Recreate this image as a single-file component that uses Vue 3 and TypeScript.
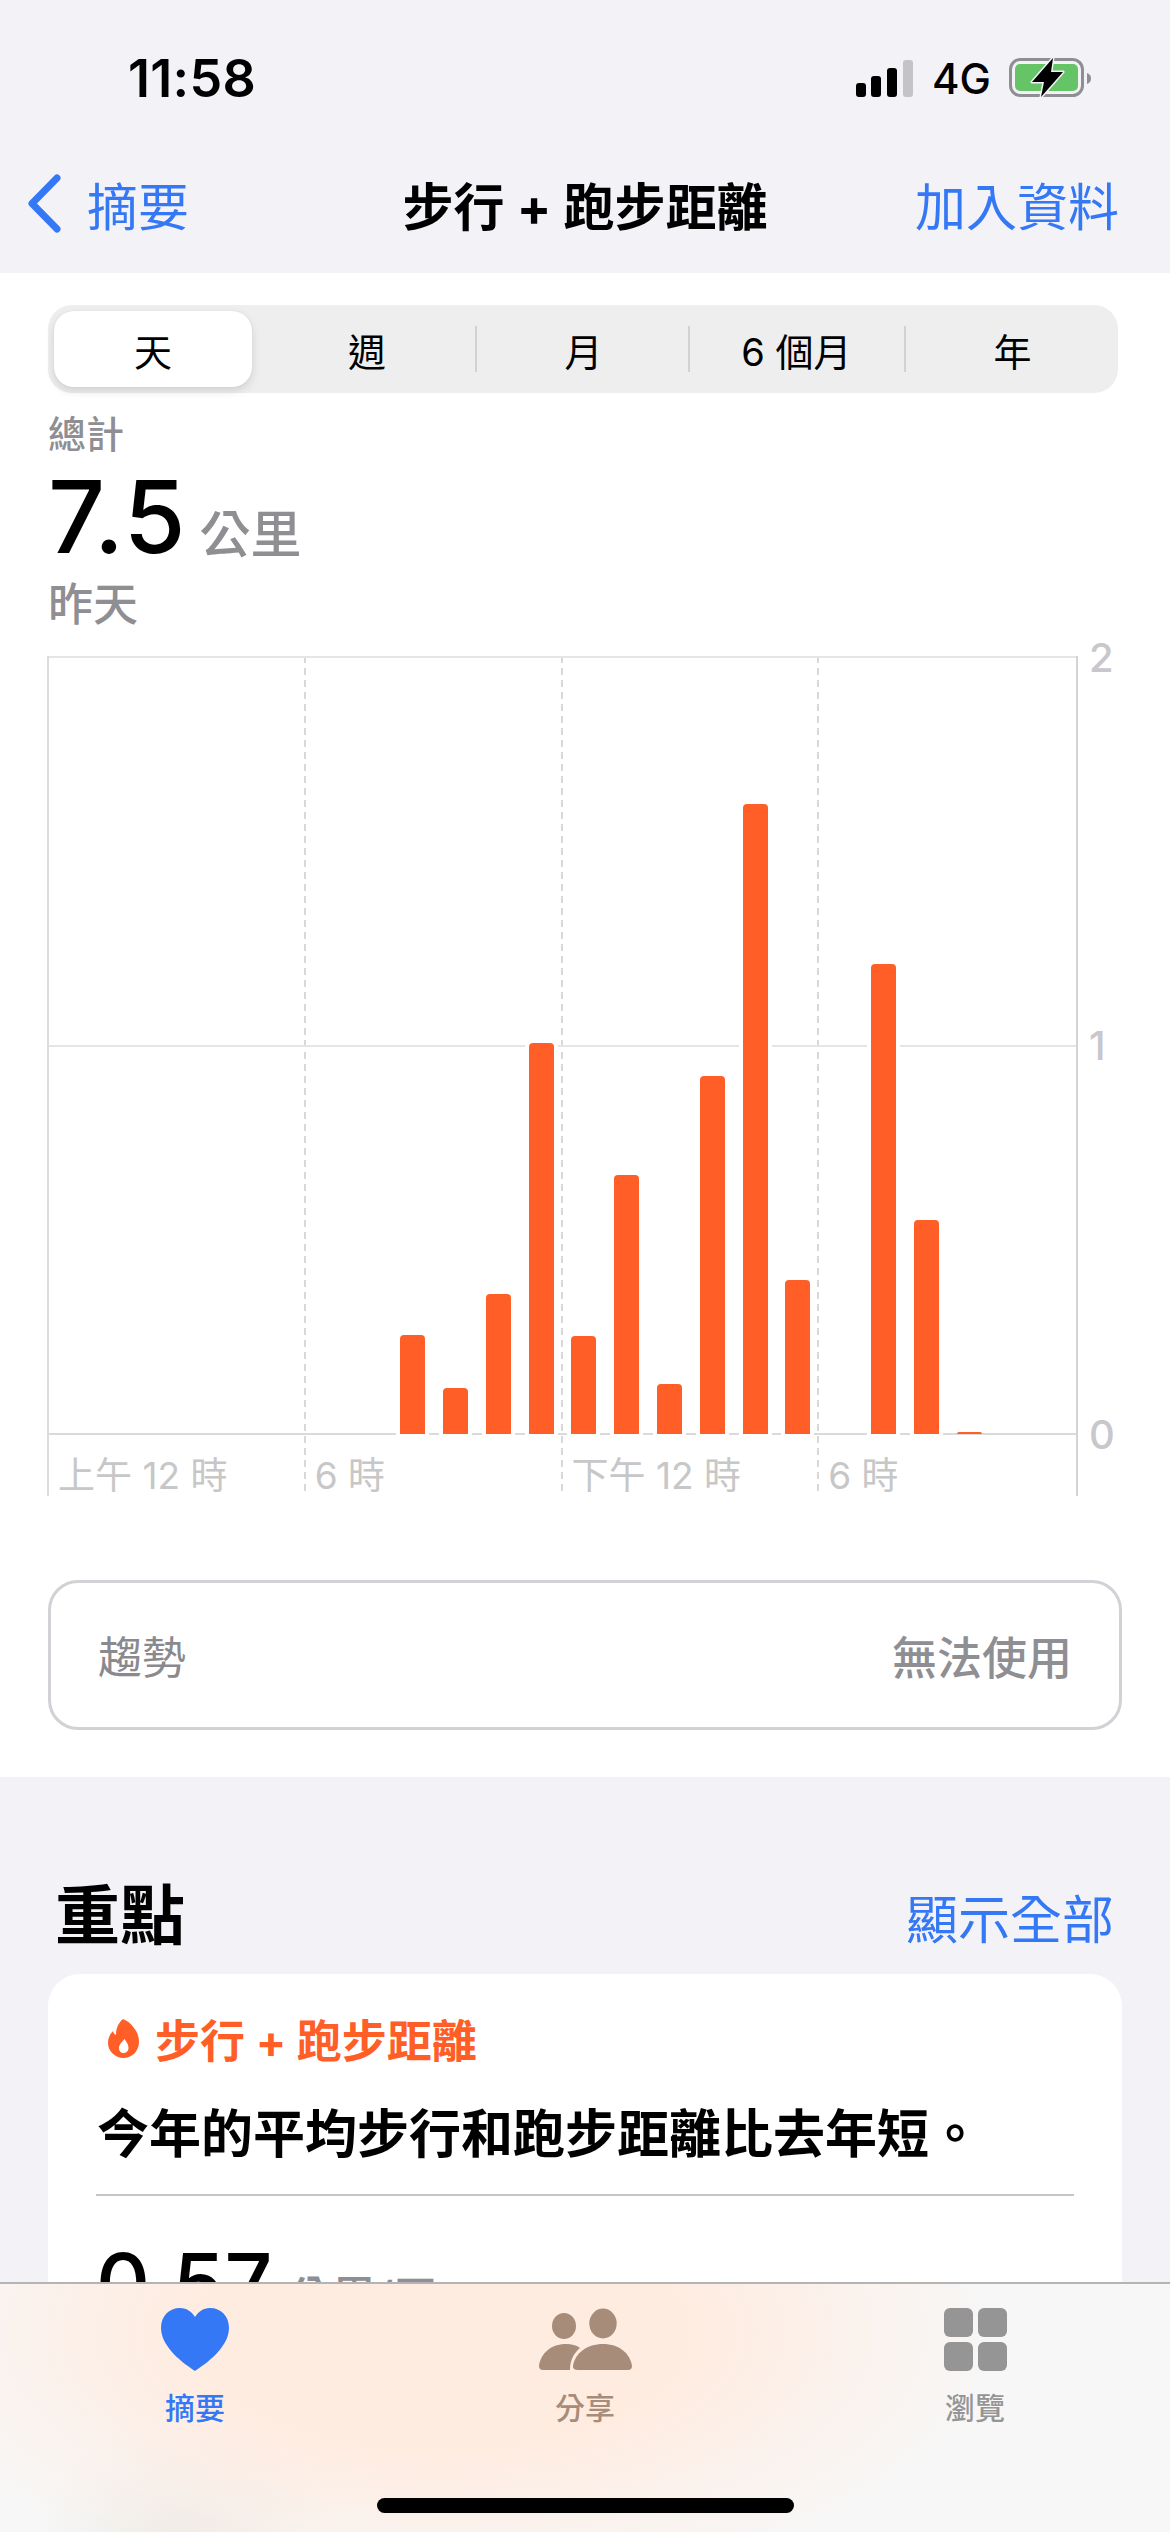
<script setup lang="ts">
interface HourBar { hour: number; height: number }

const bars: HourBar[] = [
  { hour: 8, height: 99 },
  { hour: 9, height: 46 },
  { hour: 10, height: 140 },
  { hour: 11, height: 391 },
  { hour: 12, height: 98 },
  { hour: 13, height: 259 },
  { hour: 14, height: 50 },
  { hour: 15, height: 358 },
  { hour: 16, height: 630 },
  { hour: 17, height: 154 },
  { hour: 19, height: 470 },
  { hour: 20, height: 214 },
  { hour: 21, height: 2 },
]
const segments: string[] = ['天', '週', '月', '6 個月', '年']
const hourLabels: string[] = ['上午 12 時', '6 時', '下午 12 時', '6 時']
const axis: string[] = ['2', '1', '0']
</script>

<template>
  <div class="screen" lang="zh-TW">
    <header class="top">
      <div class="status">
        <span class="time">11:58</span>
        <div class="status-right">
          <svg class="signal" width="57" height="37" viewBox="0 0 57 37">
            <rect x="0" y="23" width="10" height="14" rx="3" fill="#000" />
            <rect x="15" y="16" width="10" height="21" rx="3" fill="#000" />
            <rect x="31" y="8" width="10" height="29" rx="3" fill="#000" />
            <rect x="47" y="0" width="10" height="37" rx="3" fill="#c4c4c8" />
          </svg>
          <span class="net">4G</span>
          <svg class="battery" width="84" height="42" viewBox="0 0 84 42">
            <rect x="1.500" y="2.500" width="72" height="36" rx="10" fill="none" stroke="#8e8e93" stroke-width="3" />
            <rect x="6" y="7" width="63" height="27" rx="5" fill="#65c466" />
            <path d="M78 16 C81 17 82 19 82 21.500 C82 24 81 26 78 27 Z" fill="#8e8e93" />
            <path
              d="M44 1 L23 25 L35 25 L32 40 L54 15 L42 15 Z"
              fill="#000"
              stroke="#f2f2f7"
              stroke-width="3"
              stroke-linejoin="round"
              paint-order="stroke"
            />
          </svg>
        </div>
      </div>
      <nav class="nav">
        <div class="nav-back">
          <svg width="36" height="62" viewBox="0 0 36 62">
            <path d="M31 5 L6 30.500 L31 56" fill="none" stroke="#3478f6" stroke-width="7" stroke-linecap="round" stroke-linejoin="round" />
          </svg>
          <span>摘要</span>
        </div>
        <h1 class="nav-title">步行 + 跑步距離</h1>
        <span class="nav-action">加入資料</span>
      </nav>
    </header>

    <section class="sheet">
      <div class="segments">
        <div v-for="(s, i) in segments" :key="s" class="segment" :class="{ active: i === 0 }">{{ s }}</div>
      </div>

      <div class="summary">
        <div class="sum-label">總計</div>
        <div class="sum-value"><span class="num">7.5</span><span class="unit">公里</span></div>
        <div class="sum-date">昨天</div>
      </div>

      <div class="chart">
        <div class="hours">
          <div v-for="(h, i) in hourLabels" :key="i" class="hour-cell">{{ h }}</div>
        </div>
        <div class="rules"><i></i><i></i><i></i></div>
        <div class="bars">
          <div
            v-for="b in bars"
            :key="b.hour"
            class="bar"
            :class="{ tiny: b.height < 4 }"
            :style="{ gridColumn: b.hour + 1, height: b.height + 'px' }"
          ></div>
        </div>
        <div class="axis">
          <span v-for="a in axis" :key="a">{{ a }}</span>
        </div>
      </div>

      <div class="trend">
        <span class="trend-name">趨勢</span>
        <span class="trend-state">無法使用</span>
      </div>
    </section>

    <section class="highlights">
      <div class="hl-head">
        <h2>重點</h2>
        <span>顯示全部</span>
      </div>
      <article class="card">
        <div class="card-title">
          <svg width="31" height="39" viewBox="0 0 31 39">
            <path
              fill="#ff5e27"
              fill-rule="evenodd"
              d="M15 0 C18 1 23 4 26 9 C29.500 13 31 18 31 23 C31 32 24 39 15.500 39 C7 39 0 32 0 24 C0 19 2 15 5 12 C5.500 14 6.500 15.500 8 16 C8 10 10 4 15 0 Z M16.500 20 C14 23 11 25.500 11 29 C11 32 13 34 15.500 34 C18 34 20.500 32 20.500 29 C20.500 25.500 18.500 23 16.500 20 Z"
            />
          </svg>
          <span>步行 + 跑步距離</span>
        </div>
        <p class="card-text">今年的平均步行和跑步距離比去年短。</p>
        <div class="card-rule"></div>
        <div class="card-value"><span class="card-num">0.57</span><span class="card-unit">公里/天</span></div>
      </article>
    </section>

    <footer class="tabbar">
      <div class="tabs">
        <div class="tab tab-blue">
          <svg width="68" height="63" viewBox="0 0 68 63">
            <path fill="#3478f6" d="M34 63 C30 60 0 42 0 20 C0 8 8 0 19 0 C26 0 31 4 34 9 C37 4 42 0 49 0 C60 0 68 8 68 20 C68 42 38 60 34 63 Z" />
          </svg>
          <span>摘要</span>
        </div>
        <div class="tab tab-brown">
          <svg width="93" height="63" viewBox="0 0 93 63">
            <g fill="#a88c7a">
              <ellipse cx="25" cy="18" rx="12" ry="13" />
              <ellipse cx="64" cy="15.500" rx="13.700" ry="15" />
              <path d="M39 62 Q33.500 62 34 58 C36 45 48 36 64 36 C80 36 91 45 93 58 Q93 62 89 62 Z" />
              <path d="M4 62 Q0 62 0 58 C2 45 12 36 27 36 C33 36 37 37 41 40 C35 45 31 52 31 62 Z" />
            </g>
          </svg>
          <span>分享</span>
        </div>
        <div class="tab tab-gray">
          <div class="grid-icon"><i></i><i></i><i></i><i></i></div>
          <span>瀏覽</span>
        </div>
      </div>
      <div class="home"></div>
    </footer>
  </div>
</template>

<style scoped>
.screen {
  position: relative;
  width: 1170px;
  height: 2532px;
  overflow: hidden;
  background: #f2f2f7;
  color: #000;
  font-family: Inter, "Noto Sans CJK TC", sans-serif;
}

/* header */
.top { background: #f2f2f7; }
.status {
  display: flex;
  align-items: center;
  justify-content: space-between;
  height: 136px;
  padding: 10px 77px 0 128px;
}
.time { font-size: 52px; font-weight: 600; letter-spacing: 0.3px; }
.status-right { display: flex; align-items: center; }
.net { margin: 0 18px 0 19px; font-size: 42px; font-weight: 500; }
.nav {
  display: grid;
  grid-template-columns: 1fr auto 1fr;
  align-items: center;
  height: 115px;
  padding: 0 51px 12px 26px;
  font-size: 51px;
  color: #3478f6;
}
.nav-back { display: flex; align-items: center; gap: 25px; }
.nav-action { justify-self: end; }
.nav-title {
  margin: 0 0 0 25px;
  font-size: 51px;
  font-weight: 700;
  color: #000;
}

/* sheet */
.sheet { background: #fff; padding: 32px 0 47px; }
.segments {
  display: grid;
  grid-template-columns: 198px 225px 213px 216px 207px;
  align-items: center;
  height: 88px;
  margin: 0 52px 0 48px;
  padding: 0 6px;
  border-radius: 24px;
  background: #eeeeef;
}
.segment {
  position: relative;
  display: flex;
  align-items: center;
  justify-content: center;
  height: 76px;
  font-size: 38px;
}
.segment:nth-child(2) { padding-left: 5px; }
.segment:nth-child(4) { padding-right: 3px; }
.segment:nth-child(5) { padding-left: 6px; }
.segment:nth-child(2)::after,
.segment:nth-child(3)::after,
.segment:nth-child(4)::after {
  content: "";
  position: absolute;
  right: 0;
  top: 15px;
  width: 2px;
  height: 46px;
  background: #d2d2d4;
}
.segment.active {
  border-radius: 20px;
  background: #fff;
  box-shadow: 0 4px 10px rgba(0, 0, 0, 0.12), 0 0 2px rgba(0, 0, 0, 0.06);
}

.summary { margin: 18px 0 0 48px; }
.sum-label { font-size: 38px; line-height: 46px; font-weight: 500; color: #8e8e93; }
.sum-value { display: flex; align-items: baseline; height: 117px; margin-top: 5px; }
.num { font-size: 100px; line-height: 110px; font-weight: 500; letter-spacing: 1px; }
.unit { margin-left: 13px; font-size: 51px; line-height: 60px; font-weight: 500; color: #8e8e93; }
.sum-date { font-size: 45px; line-height: 52px; font-weight: 500; color: #8e8e93; }

/* chart */
.chart {
  position: relative;
  box-sizing: border-box;
  width: 1031px;
  height: 840px;
  margin: 25px 0 0 47px;
  border-left: 2px solid #dcdcdc;
  border-right: 2px solid #d4d4d4;
}
.hours {
  position: absolute;
  inset: 0;
  display: grid;
  grid-template-columns: repeat(4, 1fr);
}
.hour-cell {
  display: flex;
  align-items: flex-end;
  padding: 0 0 0 9px;
  font-size: 37px;
  line-height: 40px;
  color: #c7c7c7;
  background-image: repeating-linear-gradient(to bottom, #d8d8d8 0 7px, transparent 7px 12px);
  background-repeat: no-repeat;
  background-size: 2px 100%;
  background-position: right top;
}
.hour-cell:last-child { background-image: none; }
.rules {
  position: absolute;
  left: 0;
  right: 0;
  top: 0;
  height: 779px;
  display: flex;
  flex-direction: column;
  justify-content: space-between;
}
.rules i { display: block; height: 2px; background: #e5e5e5; }
.rules i:last-child { background: #dadada; }
.bars {
  position: absolute;
  left: 0;
  right: 0;
  top: 0;
  height: 778px;
  display: grid;
  grid-template-columns: repeat(24, 1fr);
  align-items: end;
  justify-items: center;
}
.bar {
  grid-row: 1;
  width: 25px;
  border-radius: 4px 4px 0 0;
  background: #ff5e27;
  box-shadow: 0 0 0 4px #fff;
}
.bar.tiny { box-shadow: none; }
.axis {
  position: absolute;
  left: calc(100% + 13px);
  top: 0;
  height: 779px;
  display: flex;
  flex-direction: column;
  justify-content: space-between;
}
.axis span {
  display: flex;
  align-items: center;
  height: 2px;
  font-size: 40px;
  font-weight: 500;
  color: #c7c7cc;
}

.trend {
  display: flex;
  align-items: center;
  justify-content: space-between;
  box-sizing: border-box;
  height: 150px;
  margin: 84px 48px 0;
  padding: 0 47px 0 47px;
  border: 3px solid #d1d1d6;
  border-radius: 30px;
  font-size: 44px;
}
.trend-name { color: #8a8a8e; }
.trend-state { font-size: 45px; font-weight: 500; color: #8e8e93; }

/* highlights */
.highlights { padding-top: 91px; }
.hl-head {
  display: flex;
  align-items: flex-end;
  justify-content: space-between;
  height: 106px;
  padding: 0 56px 20px 55px;
  box-sizing: border-box;
}
.hl-head h2 { margin: 0; font-size: 65px; line-height: 76px; font-weight: 700; }
.hl-head span { font-size: 52px; line-height: 66px; color: #3478f6; }
.card {
  height: 500px;
  margin: 0 48px;
  padding: 0 48px;
  border-radius: 32px;
  background: #fff;
  overflow: hidden;
}
.card-title {
  display: flex;
  align-items: center;
  gap: 16px;
  margin: 41px 0 0 12px;
  height: 46px;
  font-size: 45px;
  font-weight: 700;
  color: #ff5e27;
}
.card-text {
  margin: 43px 0 0 1px;
  font-size: 52px;
  line-height: 62px;
  font-weight: 600;
}
.card-rule { height: 2px; margin-top: 28px; background: #c6c6c8; }
.card-value { display: flex; align-items: baseline; margin-top: 33px; }
.card-num { font-size: 84px; line-height: 110px; font-weight: 500; }
.card-unit { margin-left: 14px; font-size: 45px; font-weight: 500; color: #8e8e93; }

/* tab bar */
.tabbar {
  position: absolute;
  left: 0;
  right: 0;
  bottom: 0;
  height: 250px;
  box-sizing: border-box;
  border-top: 2px solid #b4b4b4;
  background:
    radial-gradient(ellipse 560px 260px at 440px 50px, #ffece1 0%, #ffece1 45%, rgba(255, 236, 225, 0) 100%),
    radial-gradient(ellipse 150px 110px at 185px 250px, #ecece9 0%, rgba(236, 236, 233, 0) 100%),
    #f7f7f7;
}
.tabs { display: flex; padding-top: 24px; }
.tab {
  flex: 1;
  display: flex;
  flex-direction: column;
  align-items: center;
  font-size: 30px;
  font-weight: 500;
}
.tab svg, .grid-icon { display: block; }
.tab span { margin-top: 17px; line-height: 40px; }
.tab-blue { color: #3478f6; }
.tab-brown { color: #a88c7a; }
.tab-gray { color: #959595; }
.grid-icon {
  display: grid;
  grid-template-columns: 29px 29px;
  grid-template-rows: 29px 29px;
  gap: 5px;
  height: 63px;
}
.grid-icon i { display: block; border-radius: 6px; background: #959595; }
.home {
  width: 417px;
  height: 15px;
  margin: 70px auto 0;
  border-radius: 8px;
  background: #000;
}
</style>
